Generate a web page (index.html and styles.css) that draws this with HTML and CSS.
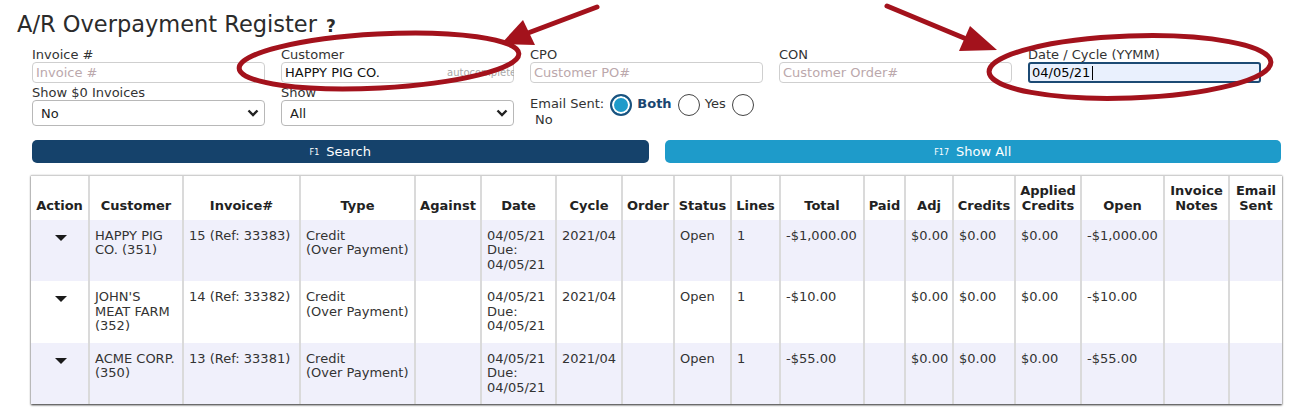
FILE: index.html
```html
<!DOCTYPE html>
<html>
<head>
<meta charset="utf-8">
<link rel="stylesheet" href="styles.css">
</head>
<body>
<div class="page">
  <h1 class="title">A/R Overpayment Register <span class="help">?</span></h1>
  <div class="content">
    <div class="filters">
      <div class="field"><label>Invoice #</label><input class="txt" placeholder="Invoice #"></div>
      <div class="field"><label>Customer</label><div class="ac"><input class="txt" value="HAPPY PIG CO."><span class="ac-hint">autocomplete</span></div></div>
      <div class="field"><label>CPO</label><input class="txt" placeholder="Customer PO#"></div>
      <div class="field"><label>CON</label><input class="txt" placeholder="Customer Order#"></div>
      <div class="field"><label>Date / Cycle (YYMM)</label><div class="ac"><input class="txt focus" value="04/05/21"><span class="caretline"></span></div></div>
      <div class="field"><label>Show $0 Invoices</label><div class="sel"><select><option>No</option></select><svg class="chev" width="12" height="8" viewBox="0 0 12 8"><path d="M1.5 1.5 L6 6 L10.5 1.5" fill="none" stroke="#222" stroke-width="2.4"/></svg></div></div>
      <div class="field"><label>Show</label><div class="sel"><select><option>All</option></select><svg class="chev" width="12" height="8" viewBox="0 0 12 8"><path d="M1.5 1.5 L6 6 L10.5 1.5" fill="none" stroke="#222" stroke-width="2.4"/></svg></div></div>
      <div class="field email"><span>Email Sent:</span><input type="radio" name="es" class="rad" checked> <span class="rl both">Both</span><input type="radio" name="es" class="rad"> <span class="rl">Yes</span><input type="radio" name="es" class="rad"> <span class="rl no">No</span></div>
    </div>
    <div class="buttons">
      <button class="btn search"><span class="fk">F1</span>Search</button>
      <button class="btn showall"><span class="fk">F17</span>Show All</button>
    </div>
    <div class="grid-wrap">
      <table class="grid">
        <colgroup>
          <col class="w58"><col class="w94"><col class="w117"><col class="w115"><col class="w66"><col class="w75"><col class="w66"><col class="w52"><col class="w57"><col class="w49"><col class="w84"><col class="w41"><col class="w48"><col class="w62"><col class="w66"><col class="w83"><col class="w65"><col class="w53">
        </colgroup>
        <thead>
          <tr><th>Action</th><th>Customer</th><th>Invoice#</th><th>Type</th><th>Against</th><th>Date</th><th>Cycle</th><th>Order</th><th>Status</th><th>Lines</th><th>Total</th><th>Paid</th><th>Adj</th><th>Credits</th><th>Applied Credits</th><th>Open</th><th>Invoice Notes</th><th>Email Sent</th></tr>
        </thead>
        <tbody>
          <tr class="alt"><td class="act"><span class="caret"></span></td><td>HAPPY PIG<br>CO. (351)</td><td class="nw">15 (Ref: 33383)</td><td>Credit<br><span class="nw">(Over Payment)</span></td><td></td><td>04/05/21<br>Due:<br>04/05/21</td><td>2021/04</td><td></td><td>Open</td><td>1</td><td>-$1,000.00</td><td></td><td>$0.00</td><td>$0.00</td><td>$0.00</td><td>-$1,000.00</td><td></td><td></td></tr>
          <tr><td class="act"><span class="caret"></span></td><td class="nw">JOHN'S<br>MEAT FARM<br>(352)</td><td class="nw">14 (Ref: 33382)</td><td>Credit<br><span class="nw">(Over Payment)</span></td><td></td><td>04/05/21<br>Due:<br>04/05/21</td><td>2021/04</td><td></td><td>Open</td><td>1</td><td>-$10.00</td><td></td><td>$0.00</td><td>$0.00</td><td>$0.00</td><td>-$10.00</td><td></td><td></td></tr>
          <tr class="alt"><td class="act"><span class="caret"></span></td><td class="nw">ACME CORP.<br>(350)</td><td class="nw">13 (Ref: 33381)</td><td>Credit<br><span class="nw">(Over Payment)</span></td><td></td><td>04/05/21<br>Due:<br>04/05/21</td><td>2021/04</td><td></td><td>Open</td><td>1</td><td>-$55.00</td><td></td><td>$0.00</td><td>$0.00</td><td>$0.00</td><td>-$55.00</td><td></td><td></td></tr>
        </tbody>
      </table>
    </div>
  </div>
  <svg class="annot" width="1304" height="418" viewBox="0 0 1304 418">
    <g fill="none" stroke="#a3121c" stroke-width="5" stroke-linecap="round">
      <ellipse cx="379" cy="61" rx="140" ry="27" transform="rotate(-3 379 61)"/>
      <ellipse cx="1130" cy="67" rx="141" ry="31" transform="rotate(-2 1130 67)"/>
      <line x1="597" y1="7" x2="528" y2="33"/>
      <line x1="887" y1="6" x2="964" y2="38"/>
    </g>
    <g fill="#a3121c">
      <polygon points="501,44 523,20 535,45"/>
      <polygon points="997,50 970,26 959,51"/>
    </g>
  </svg>
</div>
</body>
</html>
```

FILE: styles.css
```css
* { box-sizing: border-box; }

body {
  margin: 0;
  background: #fff;
  font-family: "DejaVu Sans", Verdana, sans-serif;
  font-size: 13px;
  color: #333;
}

.page {
  position: relative;
  width: 1304px;
  height: 418px;
  overflow: hidden;
}

.title {
  margin: 0;
  height: 47px;
  padding: 10px 0 0 17px;
  font-size: 22.5px;
  font-weight: normal;
  line-height: 28px;
  color: #2b2b2b;
}

.help {
  font-size: 17px;
  font-weight: bold;
  margin-left: 2px;
}

.content {
  margin-left: 32px;
  width: 1249px;
}

.filters {
  display: grid;
  grid-template-columns: repeat(5, 233px);
  column-gap: 16px;
  row-gap: 2px;
}

.field label {
  display: block;
  line-height: 15px;
  color: #333;
}

.txt {
  display: block;
  width: 233px;
  height: 21px;
  margin: 0;
  border: 1px solid #cfcfcf;
  border-radius: 4px;
  padding: 0 3px;
  font-family: "DejaVu Sans", Verdana, sans-serif;
  font-size: 13px;
  color: #111;
  background: #fff;
  outline: none;
}

.txt::placeholder { color: #bba8ac; }

.txt.focus {
  border: 2px solid #1c4a74;
  border-radius: 3px;
  background: #e9f0fd;
  padding: 0 2px;
  color: #000;
}

.ac {
  position: relative;
  width: 233px;
  overflow: hidden;
}

.ac-hint {
  position: absolute;
  left: 166px;
  top: 5px;
  font-size: 10px;
  line-height: 12px;
  color: #aaa;
  white-space: nowrap;
}

.caretline {
  position: absolute;
  left: 64px;
  top: 4px;
  width: 1px;
  height: 14px;
  background: #000;
}

.sel {
  position: relative;
  width: 233px;
}

.sel select {
  display: block;
  width: 233px;
  height: 26px;
  margin: 0;
  appearance: none;
  -webkit-appearance: none;
  border: 1px solid #b8b8b8;
  border-radius: 4px;
  background: #fff;
  padding: 0 8px;
  font-family: "DejaVu Sans", Verdana, sans-serif;
  font-size: 13px;
  color: #222;
}

.chev {
  position: absolute;
  right: 6px;
  top: 9px;
}

.email {
  padding-top: 11px;
  line-height: 15px;
  color: #333;
}

.rad {
  appearance: none;
  -webkit-appearance: none;
  display: inline-block;
  width: 22px;
  height: 22px;
  margin: -4px 0 -4px 6px;
  vertical-align: middle;
  border: 1px solid #444;
  border-radius: 50%;
  background: #fff;
}

.rad:checked {
  border: 2px solid #1a527f;
  background: #1e9bca;
  box-shadow: inset 0 0 0 2px #fff;
}

.rl {
  display: inline;
  margin-left: 1px;
}

.rl.no {
  margin-left: 5px;
}

.rl.both {
  font-weight: bold;
  color: #1a4670;
}

.buttons {
  display: grid;
  grid-template-columns: 1fr 1fr;
  column-gap: 16px;
  margin-top: 13px;
}

.btn {
  height: 23px;
  border: none;
  border-radius: 5px;
  color: #fff;
  font-family: "DejaVu Sans", Verdana, sans-serif;
  font-size: 13px;
  padding: 0;
  display: flex;
  align-items: center;
  justify-content: center;
}

.btn .fk {
  font-size: 8px;
  margin-right: 7px;
  padding-top: 2px;
}

.search { background: #15426b; }
.showall { background: #1e9bca; }

.grid-wrap {
  margin-top: 12px;
  margin-left: -1px;
  width: 1251px;
  border-top: 1px solid #cfcfcf;
  box-shadow: 0 1px 2px 0 rgba(0, 0, 0, 0.85);
}

.grid {
  width: 1251px;
  table-layout: fixed;
  border-collapse: collapse;
  color: #333;
}

.w58 { width: 58px; }
.w94 { width: 94px; }
.w117 { width: 117px; }
.w115 { width: 115px; }
.w66 { width: 66px; }
.w75 { width: 75px; }
.w52 { width: 52px; }
.w57 { width: 57px; }
.w49 { width: 49px; }
.w84 { width: 84px; }
.w41 { width: 41px; }
.w48 { width: 48px; }
.w62 { width: 62px; }
.w83 { width: 83px; }
.w65 { width: 65px; }
.w53 { width: 53px; }

.grid th,
.grid td {
  border-left: 2px solid #dadada;
  border-right: 2px solid #dadada;
}

.grid th:first-child,
.grid td:first-child { border-left: none; }
.grid th:last-child,
.grid td:last-child { border-right: none; }

.grid thead tr { height: 44px; }

.grid th {
  vertical-align: bottom;
  text-align: center;
  font-weight: bold;
  color: #222;
  line-height: 15px;
  padding: 0 1px 7px;
  background: #fff;
}

.grid tbody tr { height: 61.5px; }

.grid tbody tr.alt td { background: #f0f0fb; }

.grid td {
  vertical-align: top;
  text-align: left;
  line-height: 14.5px;
  padding: 9px 2px 0 5px;
}

.nw { white-space: nowrap; }

.grid td.act {
  text-align: center;
  padding-top: 15px;
}

.caret {
  display: inline-block;
  width: 0;
  height: 0;
  border-left: 6px solid transparent;
  border-right: 6px solid transparent;
  border-top: 6px solid #1a1a1a;
  vertical-align: top;
}

.annot {
  position: absolute;
  left: 0;
  top: 0;
  pointer-events: none;
}
```
